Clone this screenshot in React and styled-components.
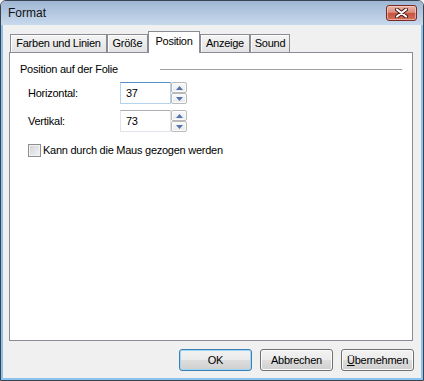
import styled, { createGlobalStyle } from 'styled-components';

const GlobalStyle = createGlobalStyle`
  html, body {
    margin: 0;
    padding: 0;
    background: #f0f0f0;
  }
  body {
    font-family: "Liberation Sans", Arial, sans-serif;
    font-size: 11px;
    letter-spacing: -0.25px;
    color: #000;
  }
`;

const Window = styled.div`
  width: 424px;
  height: 381px;
  box-sizing: border-box;
  border: 1px solid #3a4450;
  border-radius: 6px 6px 0 0;
  display: flex;
  flex-direction: column;
  overflow: hidden;
  background: #f0f0f0;
`;

const TitleBar = styled.div`
  height: 24px;
  flex: none;
  display: flex;
  align-items: flex-start;
  justify-content: space-between;
  padding-left: 7px;
  background: linear-gradient(#9fb7d4, #c8d9ec);
`;

const Title = styled.span`
  font-size: 12px;
  letter-spacing: 0;
  line-height: 24px;
  color: #111;
`;

const CloseButton = styled.div`
  width: 31px;
  height: 16px;
  box-sizing: border-box;
  margin: 4px 6px 0 0;
  border: 1px solid #7b2b22;
  border-radius: 3px;
  background: linear-gradient(#e9b4a7 0%, #dc8f7f 45%, #c55440 52%, #d2705a 100%);
  box-shadow: inset 0 0 0 1px rgba(255, 220, 210, 0.55);
  display: flex;
  align-items: center;
  justify-content: center;
`;

const Body = styled.div`
  flex: 1;
  display: flex;
  flex-direction: column;
  border: 2px solid #8cc2ee;
  border-top: none;
  padding: 6px 0 7px 6px;
  background: #f0f0f0;
`;

const TabRow = styled.div`
  display: flex;
  align-items: flex-start;
  height: 22px;
  padding-left: 1px;
  position: relative;
  z-index: 1;
`;

const Tab = styled.div`
  box-sizing: border-box;
  width: ${(p) => p.$w}px;
  height: ${(p) => (p.$active ? 22 : 18)}px;
  margin-top: ${(p) => (p.$active ? 0 : 3)}px;
  border: 1px solid #898c95;
  border-bottom: none;
  background: ${(p) => (p.$active ? '#fff' : 'linear-gradient(#f4f4f4, #e3e3e3)')};
  box-shadow: ${(p) => (p.$active ? 'none' : 'inset 1px 1px 0 #fdfdfd')};
  text-align: center;
  line-height: ${(p) => (p.$active ? 18 : 16)}px;
  white-space: nowrap;
`;

const Panel = styled.div`
  box-sizing: border-box;
  width: 404px;
  height: 289px;
  margin-top: -1px;
  border: 1px solid #898c95;
  background: #fff;
  padding: 8px 10px 0 10px;
`;

const GroupHeader = styled.div`
  display: flex;
  align-items: center;
  height: 16px;
`;

const GroupTitle = styled.span`
  width: 140px;
`;

const Rule = styled.div`
  flex: 1;
  height: 1px;
  margin-top: 1px;
  background: #a0a0a0;
`;

const FieldRow = styled.div`
  display: flex;
  align-items: center;
  height: 22px;
  margin: ${(p) => p.$top}px 0 0 8px;
`;

const FieldLabel = styled.span`
  width: 92px;
`;

const NumberBox = styled.div`
  box-sizing: border-box;
  width: 51px;
  height: 22px;
  padding-left: 5px;
  line-height: 20px;
  background: #fff;
  border: 1px solid ${(p) => (p.$focused ? '#b5d3ec' : '#e0e3e9')};
  border-top-color: ${(p) => (p.$focused ? '#5591c6' : '#abadb3')};
`;

const Spinner = styled.div`
  display: flex;
  flex-direction: column;
  width: 16px;
  height: 22px;
`;

const SpinButton = styled.div`
  box-sizing: border-box;
  height: 11px;
  border: 1px solid #b9b9b9;
  border-radius: 2px;
  background: linear-gradient(#fafafa, #e9e9e9);
  box-shadow: inset 0 0 0 1px #fdfdfd;
  display: flex;
  align-items: center;
  justify-content: center;
`;

const CheckRow = styled.label`
  display: flex;
  align-items: center;
  height: 16px;
  margin: 10px 0 0 8px;
`;

const CheckBox = styled.span`
  box-sizing: border-box;
  width: 13px;
  height: 13px;
  margin-right: 2px;
  border: 1px solid #8e8f8f;
  background: linear-gradient(135deg, #cfd2d6, #f4f4f4);
  box-shadow: inset 0 0 0 1px #f2f2f2;
`;

const Footer = styled.div`
  display: flex;
  justify-content: flex-end;
  gap: 8px;
  width: 405px;
  margin-top: 8px;
`;

const Button = styled.div`
  box-sizing: border-box;
  width: 73px;
  height: 22px;
  border: 1px solid ${(p) => (p.$default ? '#3c7fb1' : '#707070')};
  border-radius: 3px;
  background: linear-gradient(#f2f2f2 0%, #ebebeb 48%, #dddddd 52%, #cfcfcf 100%);
  box-shadow: inset 0 0 0 1px ${(p) => (p.$default ? '#9fd5f6' : '#fbfbfb')};
  text-align: center;
  line-height: 20px;
`;

const Arrow = ({ down }) => (
  <svg width="7" height="4" viewBox="0 0 7 4">
    <path d={down ? 'M0 0 H7 L3.5 4 Z' : 'M0 4 H7 L3.5 0 Z'} fill="#5473b0" />
  </svg>
);

const CloseGlyph = () => (
  <svg width="13" height="10" viewBox="0 0 13 10">
    <path d="M2 1.5 L11 8.5 M11 1.5 L2 8.5" stroke="#4a1a14" strokeWidth="4" strokeLinecap="round" />
    <path d="M2 1.5 L11 8.5 M11 1.5 L2 8.5" stroke="#fff" strokeWidth="2.2" strokeLinecap="round" />
  </svg>
);

const NumberField = ({ label, value, top, focused }) => (
  <FieldRow $top={top}>
    <FieldLabel>{label}</FieldLabel>
    <NumberBox $focused={focused}>{value}</NumberBox>
    <Spinner>
      <SpinButton><Arrow /></SpinButton>
      <SpinButton><Arrow down /></SpinButton>
    </Spinner>
  </FieldRow>
);

const tabs = [
  { name: 'Farben und Linien', w: 97 },
  { name: 'Größe', w: 41 },
  { name: 'Position', w: 52, active: true },
  { name: 'Anzeige', w: 50 },
  { name: 'Sound', w: 40 },
];

export default function App() {
  return (
    <>
      <GlobalStyle />
      <Window>
        <TitleBar>
          <Title>Format</Title>
          <CloseButton><CloseGlyph /></CloseButton>
        </TitleBar>
        <Body>
          <TabRow>
            {tabs.map((t) => (
              <Tab key={t.name} $w={t.w} $active={t.active}>{t.name}</Tab>
            ))}
          </TabRow>
          <Panel>
            <GroupHeader>
              <GroupTitle>Position auf der Folie</GroupTitle>
              <Rule />
            </GroupHeader>
            <NumberField label="Horizontal:" value="37" top={5} focused />
            <NumberField label="Vertikal:" value="73" top={6} />
            <CheckRow>
              <CheckBox />
              Kann durch die Maus gezogen werden
            </CheckRow>
          </Panel>
          <Footer>
            <Button $default>OK</Button>
            <Button>Abbrechen</Button>
            <Button><u>Ü</u>bernehmen</Button>
          </Footer>
        </Body>
      </Window>
    </>
  );
}
